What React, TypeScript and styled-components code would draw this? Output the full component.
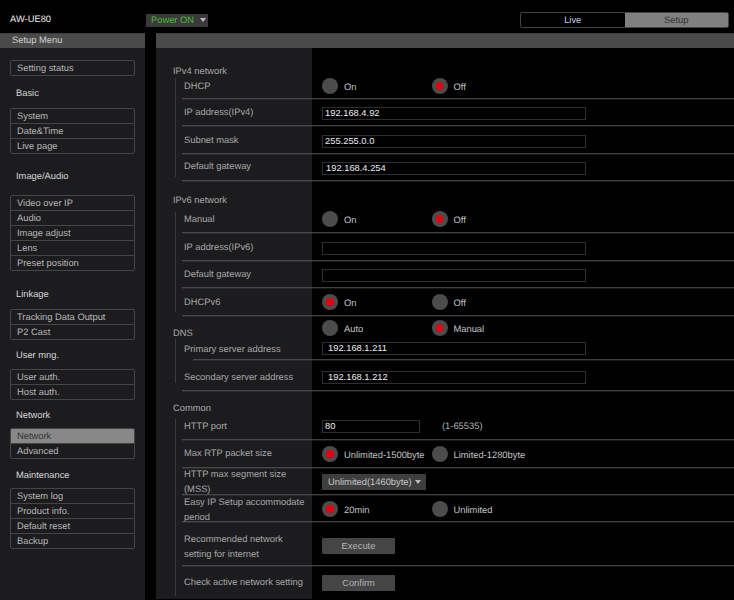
import React from "react";
import styled, { createGlobalStyle } from "styled-components";

const Global = createGlobalStyle`
  html, body { margin: 0; padding: 0; background: #000; }
  body {
    font-family: "Liberation Sans", Arial, sans-serif;
    font-size: 9.35px;
    text-rendering: geometricPrecision;
    overflow: hidden;
  }
  * { box-sizing: border-box; }
`;

const Page = styled.div`
  width: 734px;
  height: 600px;
  background: #000;
  display: flex;
  flex-direction: column;
  overflow: hidden;
`;

const TopBar = styled.header`
  height: 33px;
  flex: none;
  display: flex;
  align-items: center;
  padding-right: 5px;
`;

const Model = styled.div`
  width: 146px;
  padding-left: 10px;
  color: #eee;
  margin-top: 4px;
`;

const Power = styled.div`
  width: 62px;
  height: 13px;
  margin-top: 7px;
  background: #3a3a3a;
  color: #45bd32;
  display: flex;
  align-items: center;
  padding-left: 5px;
  gap: 6px;
  white-space: nowrap;
`;

const Caret = styled.span`
  width: 0;
  height: 0;
  border-left: 3.5px solid transparent;
  border-right: 3.5px solid transparent;
  border-top: 4px solid #bbb;
`;

const ModeSwitch = styled.div`
  margin-left: auto;
  margin-top: 6px;
  width: 209px;
  height: 16px;
  display: flex;
  border: 1px solid #444;
  border-radius: 2px;
  overflow: hidden;
`;

const ModeTab = styled.div<{ $active?: boolean }>`
  flex: 1;
  display: flex;
  align-items: center;
  justify-content: center;
  background: ${(p) => (p.$active ? "#808080" : "#000")};
  color: ${(p) => (p.$active ? "#333" : "#c4cce6")};
`;

const Columns = styled.div`
  flex: 1;
  display: flex;
  gap: 11px;
  min-height: 0;
`;

const Sidebar = styled.nav`
  width: 145px;
  flex: none;
  background: #1c1c1e;
`;

const Main = styled.main`
  flex: 1;
  height: 566px;
  background: linear-gradient(to right, #1c1c1e 156px, #000 156px);
`;

const TitleBar = styled.div`
  height: 15px;
  background: #4a4a4a;
  border-top: 1px solid #3c3c3c;
  color: #d0d0d0;
  padding-left: 12px;
  line-height: 13px;
`;

const MenuLabel = styled.div<{ $top: number }>`
  margin-top: ${(p) => p.$top}px;
  padding-left: 16px;
  height: 14px;
  line-height: 14px;
  color: #d8d8d8;
`;

const MenuBox = styled.div<{ $top: number }>`
  margin: ${(p) => p.$top}px 10px 0;
  border: 1px solid #454545;
  border-radius: 2px;
  overflow: hidden;
`;

const MenuItem = styled.div<{ $active?: boolean }>`
  height: 15px;
  line-height: 14.5px;
  padding-left: 6px;
  color: ${(p) => (p.$active ? "#333" : "#b8b8b8")};
  background: ${(p) => (p.$active ? "#888888" : "transparent")};
  border-bottom: 1px solid #454545;
  &:last-child { border-bottom: none; height: 14px; }
`;

const Heading = styled.h3<{ $top: number }>`
  font: inherit;
  margin: ${(p) => p.$top}px 0 0;
  padding-left: 17px;
  height: 14px;
  line-height: 15.5px;
  color: #a8a8a8;
`;

const Body = styled.section<{ $lineTop: number; $lineBottom: number }>`
  position: relative;
  &::before {
    content: "";
    position: absolute;
    left: 19px;
    top: ${(p) => p.$lineTop}px;
    bottom: ${(p) => p.$lineBottom}px;
    width: 1px;
    background: #3a3a3a;
  }
`;

const Row = styled.div<{ $h: number; $inset?: number; $plain?: boolean }>`
  position: relative;
  height: ${(p) => p.$h}px;
  margin-left: 28px;
  display: grid;
  grid-template-columns: 138px 1fr;
  align-items: start;
  &::after {
    content: "";
    display: ${(p) => (p.$plain ? "none" : "block")};
    position: absolute;
    left: ${(p) => (p.$inset ?? 0) - 2}px;
    right: 0;
    bottom: 0;
    height: 2px;
    background: linear-gradient(to bottom, rgba(90, 90, 90, 0.7) 50%, rgba(90, 90, 90, 0.25) 50%);
  }
`;

const HeadingRow = styled.div`
  height: 19px;
  margin-top: 3px;
  margin-left: 17px;
  display: grid;
  grid-template-columns: 149px 1fr;
  align-items: start;
`;

const RowLabel = styled.div<{ $top: number }>`
  margin-top: ${(p) => p.$top}px;
  line-height: 15px;
  max-width: 125px;
  color: #a8a8a8;
`;

const HeadingLabel = styled.div`
  margin-top: 6px;
  line-height: 15px;
  color: #a8a8a8;
`;

const Control = styled.div<{ $top: number }>`
  margin-top: ${(p) => p.$top}px;
  display: flex;
  align-items: center;
`;

const RadioGroup = styled.div`
  display: grid;
  grid-template-columns: 109.5px 1fr;
  height: 16px;
`;

const RadioItem = styled.label`
  display: flex;
  align-items: center;
  gap: 6px;
  color: #c4c4c4;
  white-space: nowrap;
`;

const RadioMark = styled.span<{ $on?: boolean }>`
  width: 16px;
  height: 16px;
  flex: none;
  border-radius: 50%;
  background: #4c4c4c;
  display: flex;
  align-items: center;
  justify-content: center;
  &::after {
    content: "";
    display: ${(p) => (p.$on ? "block" : "none")};
    width: 7.5px;
    height: 7.5px;
    border-radius: 50%;
    background: #e60012;
  }
`;

const RadioText = styled.span`
  position: relative;
  top: 0.5px;
`;

const TextBox = styled.input<{ $indent?: number; $w?: number }>`
  width: ${(p) => p.$w ?? 264}px;
  height: 12.5px;
  background: #000;
  border: 1px solid #2e2e2e;
  padding: 0 0 0 ${(p) => p.$indent ?? 2}px;
  margin: 0;
  outline: none;
  color: #eee;
  font: inherit;
`;

const Hint = styled.span`
  margin-left: 22px;
  color: #b0b0b0;
`;

const SelectBox = styled.div`
  width: 104px;
  height: 16px;
  background: #3e3e3e;
  color: #c8c8c8;
  display: flex;
  align-items: center;
  justify-content: space-between;
  padding: 0 5px 0 6px;
`;

const ActionButton = styled.button`
  width: 73px;
  height: 16px;
  padding: 0;
  border: none;
  border-radius: 1px;
  background: #454545;
  color: #b4b4b4;
  font: inherit;
`;

type Item = { name: string; active?: boolean };
const menu: { label?: string; labelTop?: number; boxTop: number; items: Item[] }[] = [
  { boxTop: 12, items: [{ name: "Setting status" }] },
  { label: "Basic", labelTop: 10, boxTop: 8, items: [{ name: "System" }, { name: "Date&Time" }, { name: "Live page" }] },
  { label: "Image/Audio", labelTop: 15, boxTop: 12, items: [{ name: "Video over IP" }, { name: "Audio" }, { name: "Image adjust" }, { name: "Lens" }, { name: "Preset position" }] },
  { label: "Linkage", labelTop: 16, boxTop: 8, items: [{ name: "Tracking Data Output" }, { name: "P2 Cast" }] },
  { label: "User mng.", labelTop: 8, boxTop: 7, items: [{ name: "User auth." }, { name: "Host auth." }] },
  { label: "Network", labelTop: 8, boxTop: 6, items: [{ name: "Network", active: true }, { name: "Advanced" }] },
  { label: "Maintenance", labelTop: 9, boxTop: 6, items: [{ name: "System log" }, { name: "Product info." }, { name: "Default reset" }, { name: "Backup" }] },
];

const Radios = ({ a, b, on }: { a: string; b: string; on: 0 | 1 }) => (
  <RadioGroup>
    <RadioItem><RadioMark $on={on === 0} /><RadioText>{a}</RadioText></RadioItem>
    <RadioItem><RadioMark $on={on === 1} /><RadioText>{b}</RadioText></RadioItem>
  </RadioGroup>
);

export default function App() {
  return (
    <Page>
      <Global />
      <TopBar>
        <Model>AW-UE80</Model>
        <Power>Power ON <Caret /></Power>
        <ModeSwitch>
          <ModeTab>Live</ModeTab>
          <ModeTab $active>Setup</ModeTab>
        </ModeSwitch>
      </TopBar>
      <Columns>
        <Sidebar>
          <TitleBar>Setup Menu</TitleBar>
          {menu.map((g, i) => (
            <React.Fragment key={i}>
              {g.label && <MenuLabel $top={g.labelTop ?? 0}>{g.label}</MenuLabel>}
              <MenuBox $top={g.boxTop}>
                {g.items.map((it) => (
                  <MenuItem key={it.name} $active={it.active}>{it.name}</MenuItem>
                ))}
              </MenuBox>
            </React.Fragment>
          ))}
        </Sidebar>
        <Main>
          <TitleBar />
          <Heading $top={16}>IPv4 network</Heading>
          <Body $lineTop={0} $lineBottom={5}>
            <Row $h={22}>
              <RowLabel $top={1}>DHCP</RowLabel>
              <Control $top={0}><Radios a="On" b="Off" on={1} /></Control>
            </Row>
            <Row $h={27}>
              <RowLabel $top={5}>IP address(IPv4)</RowLabel>
              <Control $top={7}><TextBox readOnly value="192.168.4.92" /></Control>
            </Row>
            <Row $h={28}>
              <RowLabel $top={6}>Subnet mask</RowLabel>
              <Control $top={8}><TextBox readOnly value="255.255.0.0" /></Control>
            </Row>
            <Row $h={27}>
              <RowLabel $top={4}>Default gateway</RowLabel>
              <Control $top={7}><TextBox readOnly $indent={3} value="192.168.4.254" /></Control>
            </Row>
          </Body>
          <Heading $top={11}>IPv6 network</Heading>
          <Body $lineTop={5} $lineBottom={5}>
            <Row $h={27}>
              <RowLabel $top={5}>Manual</RowLabel>
              <Control $top={4}><Radios a="On" b="Off" on={1} /></Control>
            </Row>
            <Row $h={28}>
              <RowLabel $top={6}>IP address(IPv6)</RowLabel>
              <Control $top={8}><TextBox readOnly value="" /></Control>
            </Row>
            <Row $h={27}>
              <RowLabel $top={5}>Default gateway</RowLabel>
              <Control $top={7}><TextBox readOnly value="" /></Control>
            </Row>
            <Row $h={28}>
              <RowLabel $top={6}>DHCPv6</RowLabel>
              <Control $top={5}><Radios a="On" b="Off" on={0} /></Control>
            </Row>
          </Body>
          <HeadingRow>
            <HeadingLabel>DNS</HeadingLabel>
            <Radios a="Auto" b="Manual" on={1} />
          </HeadingRow>
          <Body $lineTop={0} $lineBottom={9}>
            <Row $h={22} $inset={11}>
              <RowLabel $top={3}>Primary server address</RowLabel>
              <Control $top={3}><TextBox readOnly $indent={5} value="192.168.1.211" /></Control>
            </Row>
            <Row $h={31}>
              <RowLabel $top={9}>Secondary server address</RowLabel>
              <Control $top={10}><TextBox readOnly $indent={5} value="192.168.1.212" /></Control>
            </Row>
          </Body>
          <Heading $top={9}>Common</Heading>
          <Body $lineTop={4} $lineBottom={3}>
            <Row $h={26}>
              <RowLabel $top={4}>HTTP port</RowLabel>
              <Control $top={5}>
                <TextBox readOnly $w={98} value="80" />
                <Hint>(1-65535)</Hint>
              </Control>
            </Row>
            <Row $h={28}>
              <RowLabel $top={5}>Max RTP packet size</RowLabel>
              <Control $top={5}><Radios a="Unlimited-1500byte" b="Limited-1280byte" on={0} /></Control>
            </Row>
            <Row $h={27}>
              <RowLabel $top={-2}>HTTP max segment size (MSS)</RowLabel>
              <Control $top={5}><SelectBox>Unlimited(1460byte) <Caret /></SelectBox></Control>
            </Row>
            <Row $h={27}>
              <RowLabel $top={-1}>Easy IP Setup accommodate period</RowLabel>
              <Control $top={5}><Radios a="20min" b="Unlimited" on={0} /></Control>
            </Row>
            <Row $h={44}>
              <RowLabel $top={9}>Recommended network setting for internet</RowLabel>
              <Control $top={15}><ActionButton>Execute</ActionButton></Control>
            </Row>
            <Row $h={32} $plain>
              <RowLabel $top={8}>Check active network setting</RowLabel>
              <Control $top={8}><ActionButton>Confirm</ActionButton></Control>
            </Row>
          </Body>
        </Main>
      </Columns>
    </Page>
  );
}
